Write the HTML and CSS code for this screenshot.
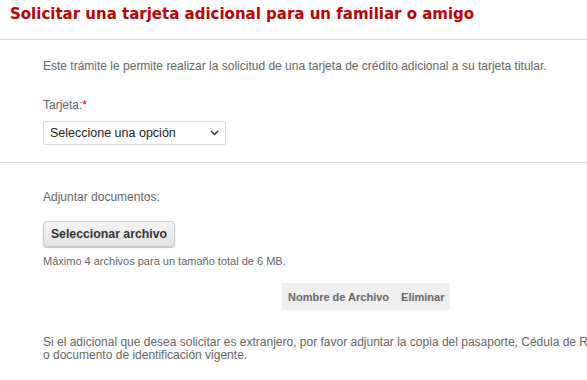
FILE: index.html
```html
<!DOCTYPE html>
<html lang="es">
<head>
<meta charset="utf-8">
<title>Solicitar una tarjeta adicional</title>
<link rel="stylesheet" href="styles.css">
</head>
<body>
<div class="page">
  <header class="head">
    <h1 class="title">Solicitar una tarjeta adicional para un familiar o amigo</h1>
  </header>
  <section class="section first">
    <p class="intro">Este trámite le permite realizar la solicitud de una tarjeta de crédito adicional a su tarjeta titular.</p>
    <label class="label" for="tarjeta">Tarjeta:<span class="req">*</span></label>
    <div class="select-wrap">
      <select id="tarjeta" class="select">
        <option>Seleccione una opción</option>
      </select>
      <svg class="chev" width="9" height="6" viewBox="0 0 9 6"><path d="M1 1 L4.5 4.5 L8 1" fill="none" stroke="#333" stroke-width="1.5"/></svg>
    </div>
  </section>
  <section class="section second">
    <p class="label2">Adjuntar documentos:</p>
    <button class="file-btn" type="button">Seleccionar archivo</button>
    <p class="hint">Máximo 4 archivos para un tamaño total de 6 MB.</p>
    <div class="table-wrap">
      <table class="files">
        <thead>
          <tr><th>Nombre de Archivo</th><th>Eliminar</th></tr>
        </thead>
      </table>
    </div>
    <p class="note">Si el adicional que desea solicitar es extranjero, por favor adjuntar la copia del pasaporte, Cédula de Residencia<br>o documento de identificación vigente.</p>
  </section>
</div>
</body>
</html>
```
FILE: styles.css
```css
html, body {
  margin: 0;
  padding: 0;
  overflow: hidden;
  background: #fff;
}
.page {
  width: 587px;
  font-family: "Liberation Sans", Arial, sans-serif;
  color: #666;
}
.head {
  padding: 4px 10px 0;
  height: 35px;
  border-bottom: 1px solid #dcdcdc;
}
.title {
  margin: 0;
  font-family: "DejaVu Sans", Verdana, sans-serif;
  font-weight: bold;
  font-size: 15px;
  line-height: 20px;
  color: #c00000;
  white-space: nowrap;
}
.section {
  padding-left: 43px;
}
.first {
  padding-top: 19px;
  padding-bottom: 17px;
  border-bottom: 1px solid #dcdcdc;
}
.intro {
  margin: 0;
  font-size: 12px;
  line-height: 14px;
  white-space: nowrap;
}
.label {
  display: block;
  margin-top: 25px;
  font-size: 12px;
  line-height: 14px;
}
.req {
  color: #c00000;
}
.select-wrap {
  position: relative;
  margin-top: 9px;
  width: 183px;
  height: 24px;
}
.select {
  -webkit-appearance: none;
  appearance: none;
  width: 183px;
  height: 24px;
  font-family: "Liberation Sans", Arial, sans-serif;
  font-size: 12.5px;
  color: #222;
  background: #fff;
  border: 1px solid #d6d6d6;
  border-radius: 2px;
  padding: 0 6px;
}
.chev {
  position: absolute;
  right: 7px;
  top: 9px;
  pointer-events: none;
}
.second {
  padding-top: 27px;
}
.label2 {
  margin: 0;
  font-size: 12px;
  line-height: 14px;
}
.file-btn {
  display: block;
  margin-top: 17px;
  height: 26px;
  width: 132px;
  padding: 0;
  font-family: "Liberation Sans", Arial, sans-serif;
  font-weight: bold;
  font-size: 12.3px;
  color: #333;
  background: linear-gradient(#f3f3f3, #e3e3e3);
  border: 1px solid #c8c8c8;
  border-radius: 4px;
  box-shadow: 0 1px 1px rgba(0,0,0,0.25);
}
.hint {
  margin: 8px 0 0;
  font-size: 11px;
  line-height: 12px;
}
.table-wrap {
  padding-left: 239px;
  margin-top: 16px;
}
.files {
  border-collapse: collapse;
  background: #efefef;
}
.files th {
  font-size: 11px;
  font-weight: bold;
  color: #666;
  height: 27px;
  padding: 0 6px;
  text-align: left;
}
.note {
  margin: 26px 0 0;
  font-size: 12px;
  line-height: 13px;
  white-space: nowrap;
}
```
